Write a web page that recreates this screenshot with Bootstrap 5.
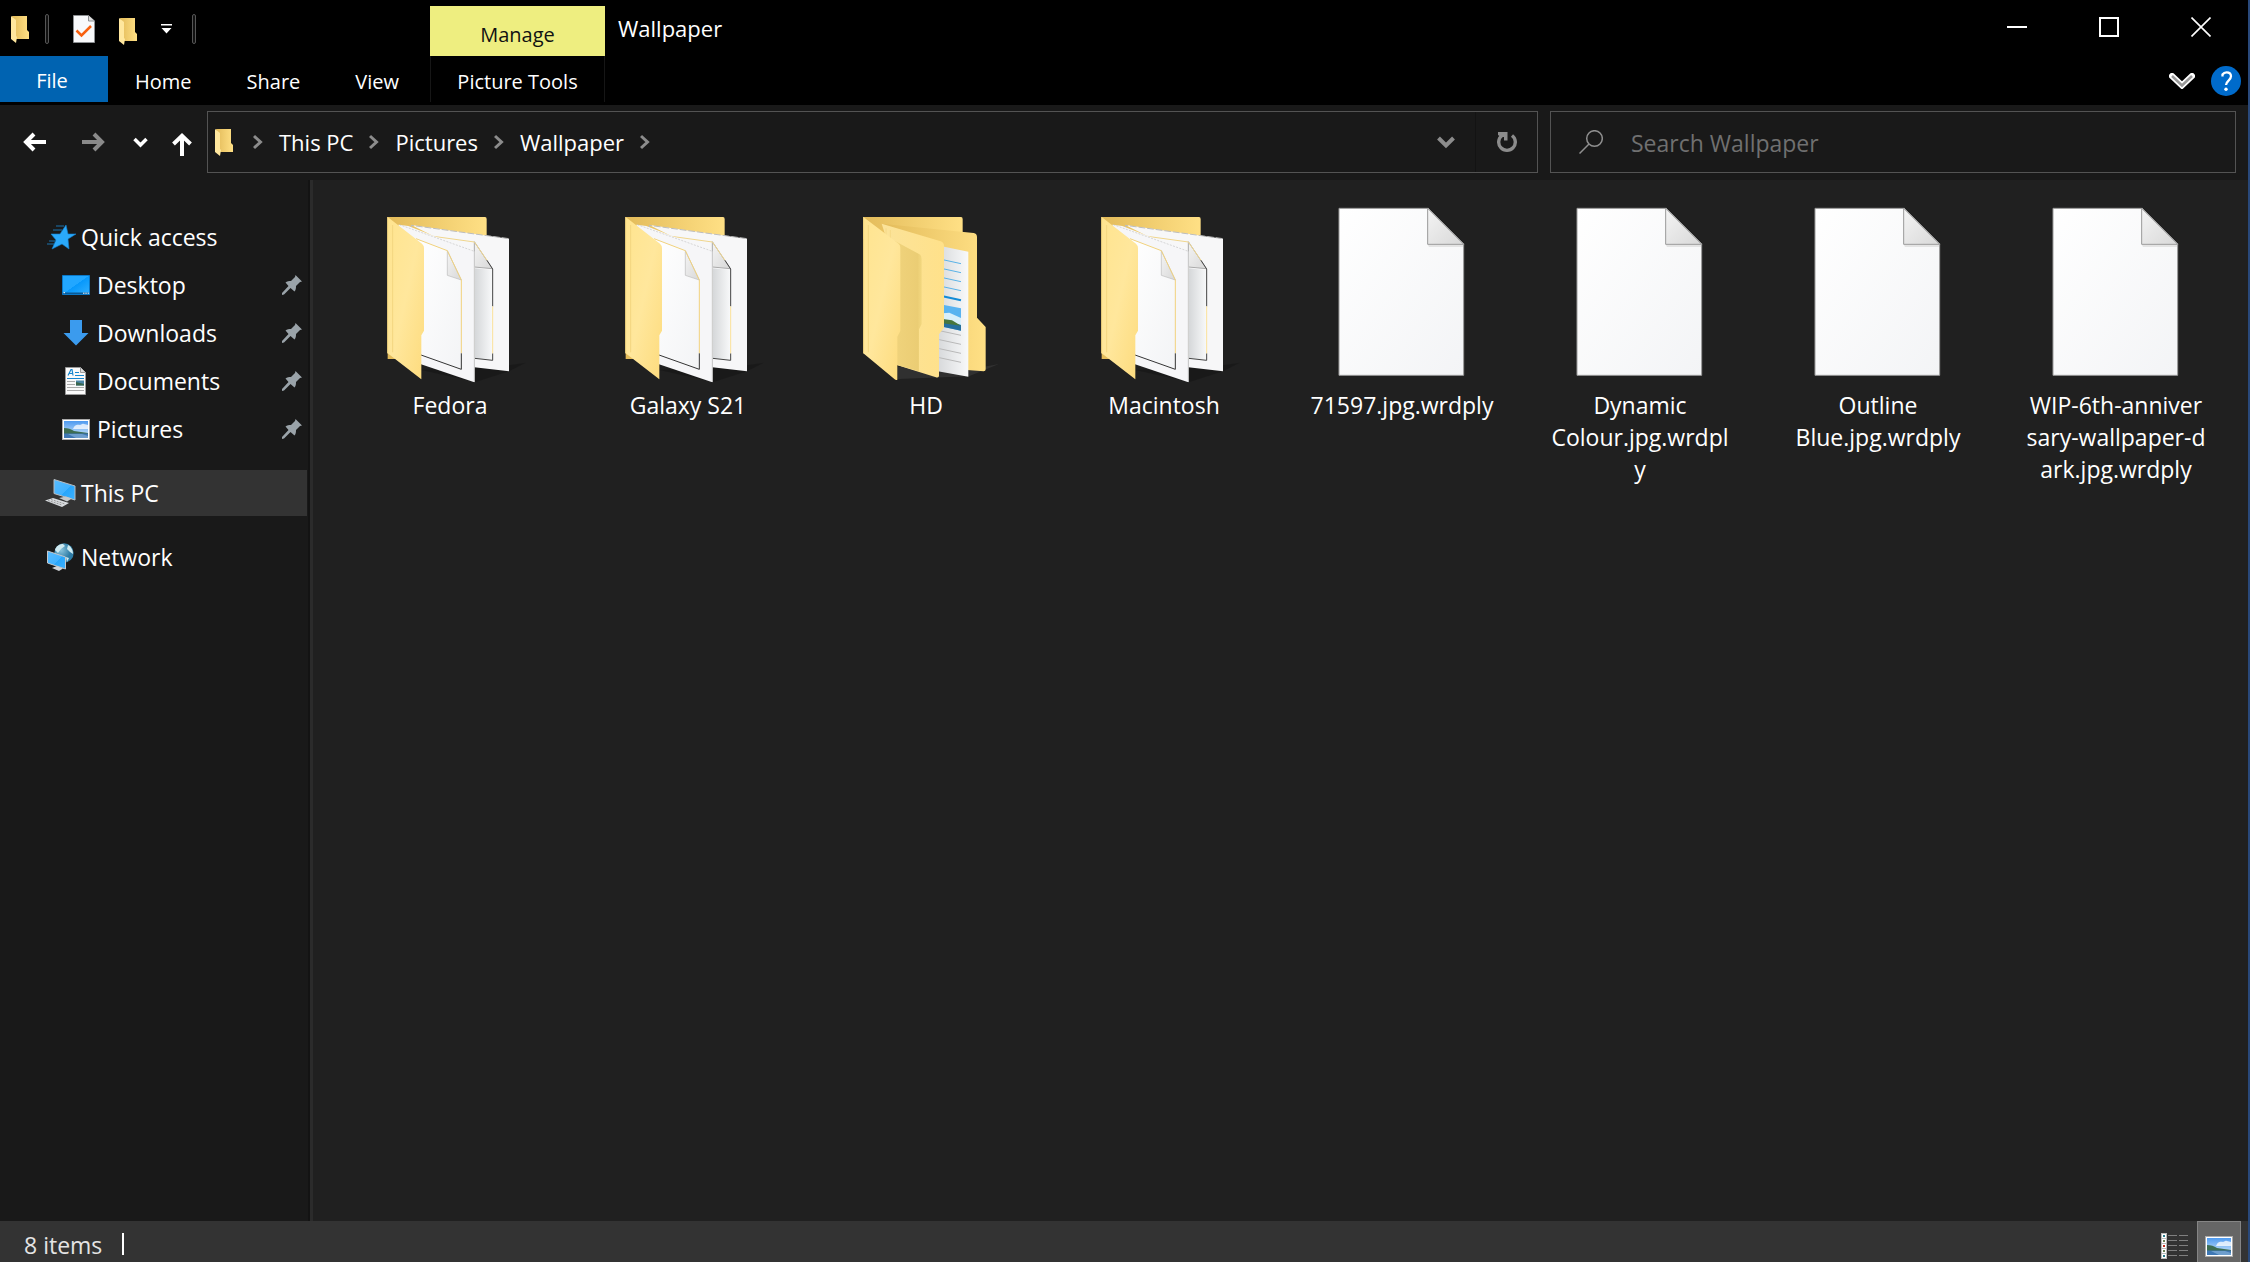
<!DOCTYPE html>
<html lang="en" data-bs-theme="dark">
<head>
<meta charset="utf-8">
<meta name="viewport" content="width=device-width, initial-scale=1">
<title>Wallpaper</title>
<link href="https://cdn.jsdelivr.net/npm/bootstrap@5.3.0/dist/css/bootstrap.min.css" rel="stylesheet">
<style>
  body { font-family: "Open Sans", "Noto Sans", sans-serif; font-size: 23px; line-height: 32px; color: #fff; background: #202020; }
  svg { display: block; flex: none; }
  .window { border-right: 2px solid #29497b; }
  .plain-btn { background: none; border: 0; padding: 0; color: inherit; display: flex; align-items: center; justify-content: center; }
  a { color: inherit; text-decoration: none; }

  .title-row { height: 56px; background: #000; padding-right: 1px; }
  .quick-tools { width: 430px; padding: 2px 0 0 11px; }
  .tool-sep { width: 4px; height: 30px; border: 1px solid #555; border-radius: 2px; background: #111; }
  .tool-end { margin-left: 20px; }
  .context-tab { width: 175px; font-size: 20px; text-align: center; }
  .context-head { height: 50px; background: #eeee80; color: #111; padding-top: 13px; }
  .window-title { font-size: 22px; padding-left: 13px; }
  .caption-btn { width: 92px; height: 54px; }

  .ribbon-row { height: 49px; background: #000; font-size: 20px; padding-bottom: 3px; }
  .ribbon-tabs { width: 430px; }
  .ribbon-tab { padding: 5px 28px 0 27px; }
  .file-tab { width: 108px; background: #0063b1; padding: 3px 4px 0 0; }
  .picture-tab { padding-top: 5px; border: solid #161616; border-width: 0 1px; }
  .ribbon-tools { gap: 16px; padding: 4px 7px 0 0; }

  .nav-row { height: 75px; background: #191919; padding: 6px 12px 7px 0; }
  .history { width: 207px; padding-left: 23px; }
  .go-forward { margin-left: 36px; }
  .go-recent { margin-left: 28px; }
  .go-up { margin-left: 24px; }
  .boxed { border: 1px solid #535353; }
  .address { flex: 1 1 0; padding-left: 7px; }
  .search-box { width: 31%; max-width: 686px; margin-left: 12px; padding-left: 28px; }
  .search-box input { background: none; border: 0; outline: 0; color: #fff; min-width: 0; padding: 2px 0 0; }
  .search-box input::placeholder { color: #707070; opacity: 1; }
  .crumb { gap: 0 16px; font-size: 22px; }
  .crumb-folder { margin-right: 4px; }
  .refresh { width: 62px; border-left: 1px solid #131313; }

  .side { width: 313px; background: #191919; border-right: 3px solid #2b2b2b; padding: 34px 3px 0 0; box-shadow: inset -2px 0 #131313; }
  .side a { height: 46px; padding-left: 44px; gap: 5px; }
  .side .sub { padding: 0 5px 0 62px; gap: 7px; }
  .side .current { background: #333; }
  .side ul { display: flex; flex-direction: column; gap: 2px; margin: 0 0 18px; }

  .files { padding: 12px 0 0 18px; }
  .file-cell { width: 238px; }
  .file-cell span { padding-top: 5px; }

  .status { height: 41px; background: #333; padding: 0 7px 0 24px; color: #e4e4e4; }
  .status-text { padding-top: 6px; }
  .status-sep { width: 2px; height: 22px; background: #fff; margin: 5px 0 0 20px; }
  .view-on { width: 44px; height: 41px; background: #666; border: solid #858585; border-width: 1px 1px 0; padding-top: 8px; }
</style>
</head>
<body>
<svg width="0" height="0" class="position-absolute" aria-hidden="true">
  <defs>
    <linearGradient id="foldBack" x1="0" x2="1"><stop offset="0" stop-color="#e3bb5a"/><stop offset="1" stop-color="#ffe085"/></linearGradient>
    <linearGradient id="foldFront" x1="0" y1="0" x2="1" y2="1"><stop offset="0" stop-color="#ffe48f"/><stop offset=".5" stop-color="#ffe79c"/><stop offset="1" stop-color="#fddb7d"/></linearGradient>
    <linearGradient id="foldMid" x1="0" x2="1"><stop offset="0" stop-color="#fbe39a"/><stop offset="1" stop-color="#ffe18a"/></linearGradient>
    <linearGradient id="foldShade" x1="0" x2="1"><stop offset="0" stop-color="#f0d37c"/><stop offset=".85" stop-color="#ebcd74"/><stop offset="1" stop-color="#f3d880"/></linearGradient>
    <linearGradient id="paper" x1="0" y1="0" x2="1" y2="1"><stop offset="0" stop-color="#fff"/><stop offset="1" stop-color="#f3f4f6"/></linearGradient>
    <linearGradient id="paperShade" x1="0" x2="1"><stop offset="0" stop-color="#d4d6d8"/><stop offset="1" stop-color="#f8f9fa"/></linearGradient>
    <linearGradient id="fold" x1="0" y1="0" x2="1" y2="1"><stop offset="0" stop-color="#f4f4f4"/><stop offset="1" stop-color="#d8d8d8"/></linearGradient>
    <linearGradient id="sky" x1="0" y1="0" x2="0" y2="1"><stop offset="0" stop-color="#4e9af0"/><stop offset="1" stop-color="#d8ecfa"/></linearGradient>
    <linearGradient id="blue" x1="0" y1="0" x2="1" y2="1"><stop offset="0" stop-color="#22a7ff"/><stop offset=".49" stop-color="#22a7ff"/><stop offset=".5" stop-color="#0798fb"/><stop offset="1" stop-color="#31b0ff"/></linearGradient>
    <linearGradient id="screen" x1="0" y1="0" x2="1" y2="1"><stop offset="0" stop-color="#58bdff"/><stop offset=".55" stop-color="#42b2ff"/><stop offset=".56" stop-color="#28a6fb"/><stop offset="1" stop-color="#3cb1ff"/></linearGradient>
    <radialGradient id="globe" cx=".35" cy=".35"><stop offset="0" stop-color="#8ac4dc"/><stop offset="1" stop-color="#2c7ba5"/></radialGradient>

    <symbol id="folder" viewBox="0 0 18 27"><path d="M1 0h15v14l2 2v7H5z" fill="url(#foldBack)"/><path d="M0 0l5 4v16l1 1-1 6-5-4z" fill="#ffe79e"/></symbol>
    <symbol id="crumbArrow" viewBox="0 0 10 16"><path d="M1 2l6.500 6L1 14" fill="none" stroke="#8c8c8c" stroke-width="3"/></symbol>
    <symbol id="pin" viewBox="0 0 20 20"><path d="M13.500 0L20 6.500l-2 .5-4 4c0 3-.3 4-1.500 5.500L8.500 13 2 19.500l-2 .5V18l6.500-7L3.500 7.500C5 6 7 6 9 6l4-4z" fill="#9aa3a9"/></symbol>
    <symbol id="photo" viewBox="0 0 28 21"><path d="M0 0h28v21H0z" fill="#aaa"/><path d="M1 1h26v19H1z" fill="#fff"/><path d="M2 2h24v17H2z" fill="url(#sky)"/><path d="M12 8c2-3 5-2 6-2s2-2 4-1l4 1v4H11z" fill="#fff" opacity=".75"/><path d="M2 9c4 0 7 1 10 3l14 2v1H2z" fill="#3d6d52"/><path d="M2 14.500h24V19H2z" fill="#3e77b4"/><path d="M6 15h14l6 2v2H14z" fill="#8fb9dd" opacity=".6"/></symbol>

    <symbol id="fileBig" viewBox="0 0 192 192"><g transform="translate(-16 -2) scale(.33333)">
      <path d="M147 55h268l106 106v395H147z" fill="url(#paper)" stroke="#999" stroke-width="3"/>
      <path d="M414 165h105v6H417z" fill="#e4e4e4"/>
      <path d="M413 55v108h108z" fill="url(#fold)" stroke="#999" stroke-width="3"/></g></symbol>

    <symbol id="folderPapers" viewBox="0 0 192 192"><g transform="translate(7 -2) scale(.33333)">
      <path d="M180 540l264-14 50-8-50 26-100 32z" fill="#151515" opacity=".6"/>
      <path d="M80 81h292q5 0 5 6v420H80z" fill="url(#foldBack)"/>
      <path d="M151 105l293 41v398l-104-12V200z" fill="#f7f7f8"/>
      <path d="M340 235l54 5v270l-54-5z" fill="url(#paperShade)"/>
      <path d="M151 118v-12l293 40" fill="none" stroke="#bdbdbd" stroke-width="3" stroke-dasharray="20 6"/>
      <path d="M340 155l54 81-54-5z" fill="url(#fold)" stroke="#aaa" stroke-width="3"/>
      <path d="M210 138l130 18 38 55" fill="none" stroke="#f0d68d" stroke-width="3"/>
      <path d="M378 211l17 26v112M395 490v21l-54-6" fill="none" stroke="#444" stroke-width="3"/>
      <path d="M395 349v141" stroke="#fbe19a" stroke-width="3"/>
      <path d="M112 104l30 4 198 77v392l-160-54z" fill="#f6f6f8"/>
      <path d="M160 145l98 36 43 88v269l-121-43z" fill="url(#paper)"/>
      <path d="M115 104l225 80" fill="none" stroke="#c4c4c4" stroke-width="2" stroke-dasharray="6 4"/>
      <path d="M340 184v392" stroke="#ccc" stroke-width="3"/>
      <path d="M259 182v74l42 14z" fill="url(#fold)" stroke="#bbb" stroke-width="2"/>
      <path d="M165 146l94 36 42 88v220" fill="none" stroke="#f1d27c" stroke-width="3"/>
      <path d="M301 490v48l-121-43" fill="none" stroke="#333" stroke-width="3"/>
      <path d="M80 81l103 80q6 5 6 14v247l-8 14v132L80 490z" fill="url(#foldFront)"/>
      <path d="M80 81v409M95 105v382" stroke="#f3d67f" stroke-width="3"/></g></symbol>

    <symbol id="folderNested" viewBox="0 0 192 192"><g transform="translate(1 -2) scale(.33333)">
      <path d="M200 530l260 0 44-8-90 37-214 8z" fill="#383838" opacity=".7"/>
      <path d="M97 81h293q5 0 5 6v60H97z" fill="url(#foldBack)"/>
      <path d="M152 101l276 28q10 1 10 12v242l26 28v127q0 6-6 6l-50-4z" fill="url(#foldBack)"/>
      <path d="M325 167l87 18v375l-100-18z" fill="url(#paperShade)"/>
      <g fill="none" stroke="#5ab2e6" stroke-width="3"><path d="M335 209l55 12M335 236l55 12M335 263l55 12M335 290l55 12"/><path d="M335 319l55 12" stroke="#128bd6" stroke-width="6"/><path stroke="#b9b9b9" d="M325 422l65 14M325 449l65 14M325 476l65 14M325 503l65 14"/></g>
      <path d="M335 344l55 11v67l-55-12z" fill="#59b3f0"/><path d="M335 370l20-2 35 16v20l-55-10z" fill="#d9effa"/><path d="M335 388l55 18v16l-55-12z" fill="#256f9e"/><path d="M335 387l28 4 27 16-55-7z" fill="#47763d"/>
      <path d="M152 101l177 53q10 3 10 14v245l-15 20v126q-3 5-9 3L190 523V220z" fill="url(#foldMid)"/>
      <path d="M190 152l74 40q8 4 8 14v196l-8 16v126l-74-21z" fill="url(#foldShade)"/>
      <path d="M165 115v30M178 120v30" stroke="#f6da87" stroke-width="3"/>
      <path d="M97 81l106 80q5 4 5 12v250l-9 17v129q-4 2-8-1L97 490z" fill="url(#foldFront)"/>
      <path d="M98 81v409M112 105v382" stroke="#f3d67f" stroke-width="3"/></g></symbol>
  </defs>
</svg>

<div class="window vh-100 d-flex flex-column overflow-hidden">
  <header>
    <div class="title-row d-flex">
      <div class="quick-tools d-flex align-items-center flex-shrink-0">
        <svg width="18" height="27" aria-hidden="true"><use href="#folder"/></svg>
        <span class="tool-sep ms-3 me-4"></span>
        <button class="plain-btn" type="button" aria-label="Properties"><svg width="22" height="28" viewBox="0 0 22 28"><path d="M.5.500h15l6 5.500v21.500H.5z" fill="#f8f9fb" stroke="#8c8f92"/><path d="M15.500.500v5.500h6" fill="#ddd" stroke="#8c8f92"/><path d="M3.500 15.500l5 5L18 11" fill="none" stroke="#f8600f" stroke-width="2.500"/></svg></button>
        <button class="plain-btn ms-4 pt-1" type="button" aria-label="New folder"><svg width="18" height="27"><use href="#folder"/></svg></button>
        <button class="plain-btn ms-4" type="button" aria-label="Customise quick access toolbar"><svg width="11" height="10" viewBox="0 0 11 10"><path d="M0 0h11v1.500H0zM.5 4h10L5.500 9.500z" fill="#fff"/></svg></button>
        <span class="tool-sep tool-end"></span>
      </div>
      <div class="context-tab flex-shrink-0 align-self-end"><div class="context-head">Manage</div></div>
      <h1 class="window-title m-0 d-flex align-items-center fw-normal">Wallpaper</h1>
      <div class="d-flex ms-auto">
        <button class="plain-btn caption-btn" type="button" aria-label="Minimise"><svg width="20" height="20"><path d="M0 10h20" stroke="#fff" stroke-width="2"/></svg></button>
        <button class="plain-btn caption-btn" type="button" aria-label="Maximise"><svg width="20" height="20"><path d="M1 1h18v18H1z" fill="none" stroke="#fff" stroke-width="2"/></svg></button>
        <button class="plain-btn caption-btn" type="button" aria-label="Close"><svg width="20" height="20"><path d="M.5.500l19 19M19.500.500l-19 19" stroke="#fff" stroke-width="1.600"/></svg></button>
      </div>
    </div>
    <div class="ribbon-row d-flex">
      <nav class="ribbon-tabs d-flex flex-shrink-0" aria-label="Ribbon">
        <a href="#" class="file-tab d-flex align-items-center justify-content-center">File</a>
        <a href="#" class="ribbon-tab d-flex align-items-center">Home</a>
        <a href="#" class="ribbon-tab d-flex align-items-center">Share</a>
        <a href="#" class="ribbon-tab d-flex align-items-center">View</a>
      </nav>
      <a href="#" class="context-tab picture-tab d-flex align-items-center justify-content-center">Picture Tools</a>
      <div class="ribbon-tools d-flex align-items-center ms-auto">
        <button class="plain-btn" type="button" aria-label="Expand the ribbon"><svg width="26" height="16" viewBox="0 0 26 16"><path d="M3 3l10 9.500L23 3" fill="none" stroke="#fff" stroke-width="6" stroke-linecap="round"/><path d="M3 3l10 9.500L23 3" fill="none" stroke="#999" stroke-width="2.500"/></svg></button>
        <button class="plain-btn" type="button" aria-label="Help"><svg width="30" height="30" viewBox="0 0 30 30"><circle cx="15" cy="15" r="15" fill="#006bcb"/><path d="M11.500 10.500v-2c1-1.500 2-2.200 4-2.200 3 0 4.500 1.700 4.500 4 0 4-5 4.500-5 8.700" fill="none" stroke="#fff" stroke-width="2.300"/><circle cx="15" cy="23.200" r="1.700" fill="#fff"/></svg></button>
      </div>
    </div>
    <div class="nav-row d-flex">
      <div class="history d-flex align-items-center flex-shrink-0">
        <button class="plain-btn" type="button" aria-label="Back"><svg width="23" height="20" viewBox="0 0 23 20"><path d="M23 10H3M11 2l-8 8 8 8" fill="none" stroke="#fff" stroke-width="4"/></svg></button>
        <button class="plain-btn go-forward" type="button" aria-label="Forward"><svg width="23" height="20" viewBox="0 0 23 20"><path d="M0 10h20M12 2l8 8-8 8" fill="none" stroke="#8a8a8a" stroke-width="4"/></svg></button>
        <button class="plain-btn go-recent" type="button" aria-label="Recent locations"><svg width="15" height="11" viewBox="0 0 15 11"><path d="M1.500 2l6 6 6-6" fill="none" stroke="#fff" stroke-width="3.500"/></svg></button>
        <button class="plain-btn go-up pt-1" type="button" aria-label="Up"><svg width="20" height="23" viewBox="0 0 20 23"><path d="M10 23V3M1.500 11L10 2.800 18.500 11" fill="none" stroke="#fff" stroke-width="4"/></svg></button>
      </div>
      <div class="address boxed d-flex">
        <nav class="crumb d-flex align-items-center" aria-label="Location">
          <svg width="18" height="27" class="crumb-folder" aria-hidden="true"><use href="#folder"/></svg>
          <svg width="10" height="16"><use href="#crumbArrow"/></svg>
          <a href="#">This PC</a>
          <svg width="10" height="16"><use href="#crumbArrow"/></svg>
          <a href="#">Pictures</a>
          <svg width="10" height="16"><use href="#crumbArrow"/></svg>
          <a href="#">Wallpaper</a>
          <svg width="10" height="16"><use href="#crumbArrow"/></svg>
        </nav>
        <button class="plain-btn ms-auto me-3 px-1" type="button" aria-label="Previous locations"><svg width="18" height="13" viewBox="0 0 18 13"><path d="M1.500 2L9 9.500 16.500 2" fill="none" stroke="#8c8c8c" stroke-width="4"/></svg></button>
        <button class="plain-btn refresh" type="button" aria-label="Refresh"><svg width="20" height="22" viewBox="0 0 20 22"><path d="M15 4.500a8.300 8.300 0 1 1-10 0" fill="none" stroke="#8c8c8c" stroke-width="3.400"/><path d="M1 1h9.500v8.500H7V6L4 6 1 4z" fill="#8c8c8c"/></svg></button>
      </div>
      <div class="search-box boxed d-flex align-items-center">
        <svg width="24" height="24" viewBox="0 0 24 24" aria-hidden="true"><circle cx="15.500" cy="8.500" r="7.800" fill="none" stroke="#8f8f8f" stroke-width="1.500"/><path d="M10 14L.5 23.500" stroke="#8f8f8f" stroke-width="1.500"/></svg>
        <input class="flex-grow-1 ms-4 ps-1" type="search" placeholder="Search Wallpaper" aria-label="Search Wallpaper">
      </div>
    </div>
  </header>

  <div class="d-flex flex-grow-1 overflow-hidden">
    <nav class="side flex-shrink-0" aria-label="Folders">
      <ul class="list-unstyled">
        <li><a href="#" class="d-flex align-items-center"><svg width="32" height="26" viewBox="0 0 32 26"><path d="M22 1l2 9h8l-8 5 1 10-7-5-10 5 4-9-5-6h9z" fill="#2aa9fb" stroke="#1381d0" stroke-width=".6"/><path d="M12 2h8M9 6h9M5 17h7M3 20h7" stroke="#1b72ad" stroke-width="1"/></svg>Quick access</a></li>
        <li><a href="#" class="sub d-flex align-items-center"><svg width="28" height="20" viewBox="0 0 28 20"><path d="M.5.500h27v19H.5z" fill="url(#blue)" stroke="#0a78c8"/><path d="M1 17.500h26V19H1z" fill="#0a5a96"/><path d="M1.500 17.700h1.500M21 18.200h6" stroke="#fff" stroke-dasharray="1.500 .8"/></svg>Desktop<svg class="ms-auto" width="20" height="20"><use href="#pin"/></svg></a></li>
        <li><a href="#" class="sub d-flex align-items-center"><svg width="28" height="26" viewBox="0 0 28 26"><path d="M8 0h12v13h6.500L14 25.500 1.500 13H8z" fill="#3b9bee"/></svg>Downloads<svg class="ms-auto" width="20" height="20"><use href="#pin"/></svg></a></li>
        <li><a href="#" class="sub d-flex align-items-center"><svg width="28" height="28" viewBox="0 0 28 28"><path d="M3.500.500h15l5 5v22h-20z" fill="#fafafa" stroke="#999"/><path d="M18.500.500v5h5" fill="#ddd" stroke="#999"/><path d="M6 8.500l3-6h1l1 6M7.500 6.500h3M13 5.500h4M13 8.500h9M5 11.500h17" fill="none" stroke="#1787cf" stroke-width="1.200"/><path d="M5 14.500h8M5 17.500h8M5 20.500h17M5 23.500h17" stroke="#aaa"/><path d="M14 13.500h8v5h-8z" fill="#4b86a8"/><path d="M14 15l8 2v1.500h-8z" fill="#3b664d"/></svg>Documents<svg class="ms-auto" width="20" height="20"><use href="#pin"/></svg></a></li>
        <li><a href="#" class="sub d-flex align-items-center"><svg width="28" height="21"><use href="#photo"/></svg>Pictures<svg class="ms-auto" width="20" height="20"><use href="#pin"/></svg></a></li>
      </ul>
      <ul class="list-unstyled">
        <li><a href="#" class="current d-flex align-items-center" aria-current="page"><svg width="32" height="28" viewBox="0 0 32 28"><path d="M10 .5L31 7v14L10 14.500z" fill="url(#screen)" stroke="#b8bcc0"/><path d="M15 19l7-1.500 6 2-5 3z" fill="#c4c8cb"/><path d="M1 21.500L9 19l16 5-7 4z" fill="#d8dcdf"/><path d="M4 21.500l14 4.500M7 20.500l14 4.500" stroke="#999" stroke-dasharray="2 1"/></svg>This PC</a></li>
      </ul>
      <ul class="list-unstyled">
        <li><a href="#" class="d-flex align-items-center"><svg width="32" height="28" viewBox="0 0 32 28"><circle cx="20" cy="10" r="9.700" fill="url(#globe)"/><path d="M11 7c1-4 5-6 8-6l2 2-4 3-3 4zM24 2c4 2 5 6 5 9l-3-2-3-3zM22 14l3 1-2 4z" fill="#cfeaf0"/><path d="M3.500 8L21.500 14v12L3.500 20z" fill="url(#screen)" stroke="#c4c8cc"/><path d="M8 25l5-2 6 2.500-4 2.500z" fill="#d0d4d8"/></svg>Network</a></li>
      </ul>
    </nav>
    <main class="files d-flex flex-wrap align-content-start flex-grow-1">
      <a href="#" class="file-cell d-flex flex-column align-items-center text-center"><svg width="192" height="192"><use href="#folderPapers"/></svg><span>Fedora</span></a>
      <a href="#" class="file-cell d-flex flex-column align-items-center text-center"><svg width="192" height="192"><use href="#folderPapers"/></svg><span>Galaxy S21</span></a>
      <a href="#" class="file-cell d-flex flex-column align-items-center text-center"><svg width="192" height="192"><use href="#folderNested"/></svg><span>HD</span></a>
      <a href="#" class="file-cell d-flex flex-column align-items-center text-center"><svg width="192" height="192"><use href="#folderPapers"/></svg><span>Macintosh</span></a>
      <a href="#" class="file-cell d-flex flex-column align-items-center text-center"><svg width="192" height="192"><use href="#fileBig"/></svg><span>71597.jpg.wrdply</span></a>
      <a href="#" class="file-cell d-flex flex-column align-items-center text-center"><svg width="192" height="192"><use href="#fileBig"/></svg><span>Dynamic<br>Colour.jpg.wrdpl<br>y</span></a>
      <a href="#" class="file-cell d-flex flex-column align-items-center text-center"><svg width="192" height="192"><use href="#fileBig"/></svg><span>Outline<br>Blue.jpg.wrdply</span></a>
      <a href="#" class="file-cell d-flex flex-column align-items-center text-center"><svg width="192" height="192"><use href="#fileBig"/></svg><span>WIP-6th-anniver<br>sary-wallpaper-d<br>ark.jpg.wrdply</span></a>
    </main>
  </div>

  <footer class="status d-flex align-items-center flex-shrink-0">
    <span class="status-text">8 items</span><span class="status-sep"></span>
    <button class="plain-btn ms-auto me-2 pt-2" type="button" aria-label="Details view"><svg width="28" height="26" viewBox="0 0 28 26"><path d="M0 0h6v26H0z" fill="#bbb"/><path d="M1 1h4v4H1zM1 6h4v4H1zM1 11h4v4H1zM1 16h4v4H1zM1 21h4v4H1z" fill="#fff"/><path d="M2 2h2v2H2zM2 22h2v2H2z" fill="#2a7b8c"/><path d="M2 7h2v2H2zM2 17h2v2H2z" fill="#6b8058"/><path d="M2 12h2v2H2z" fill="#c03020"/><path d="M7 2.500h9M18 2.500h9M7 7.500h9M18 7.500h9M7 12.500h9M18 12.500h9M7 17.500h9M18 17.500h9M7 22.500h9M18 22.500h9" stroke="#808080"/></svg></button>
    <button class="plain-btn view-on" type="button" aria-label="Large icons view" aria-pressed="true"><svg width="28" height="21"><use href="#photo"/></svg></button>
  </footer>
</div>
<script src="https://cdn.jsdelivr.net/npm/bootstrap@5.3.0/dist/js/bootstrap.bundle.min.js"></script>
</body>
</html>
